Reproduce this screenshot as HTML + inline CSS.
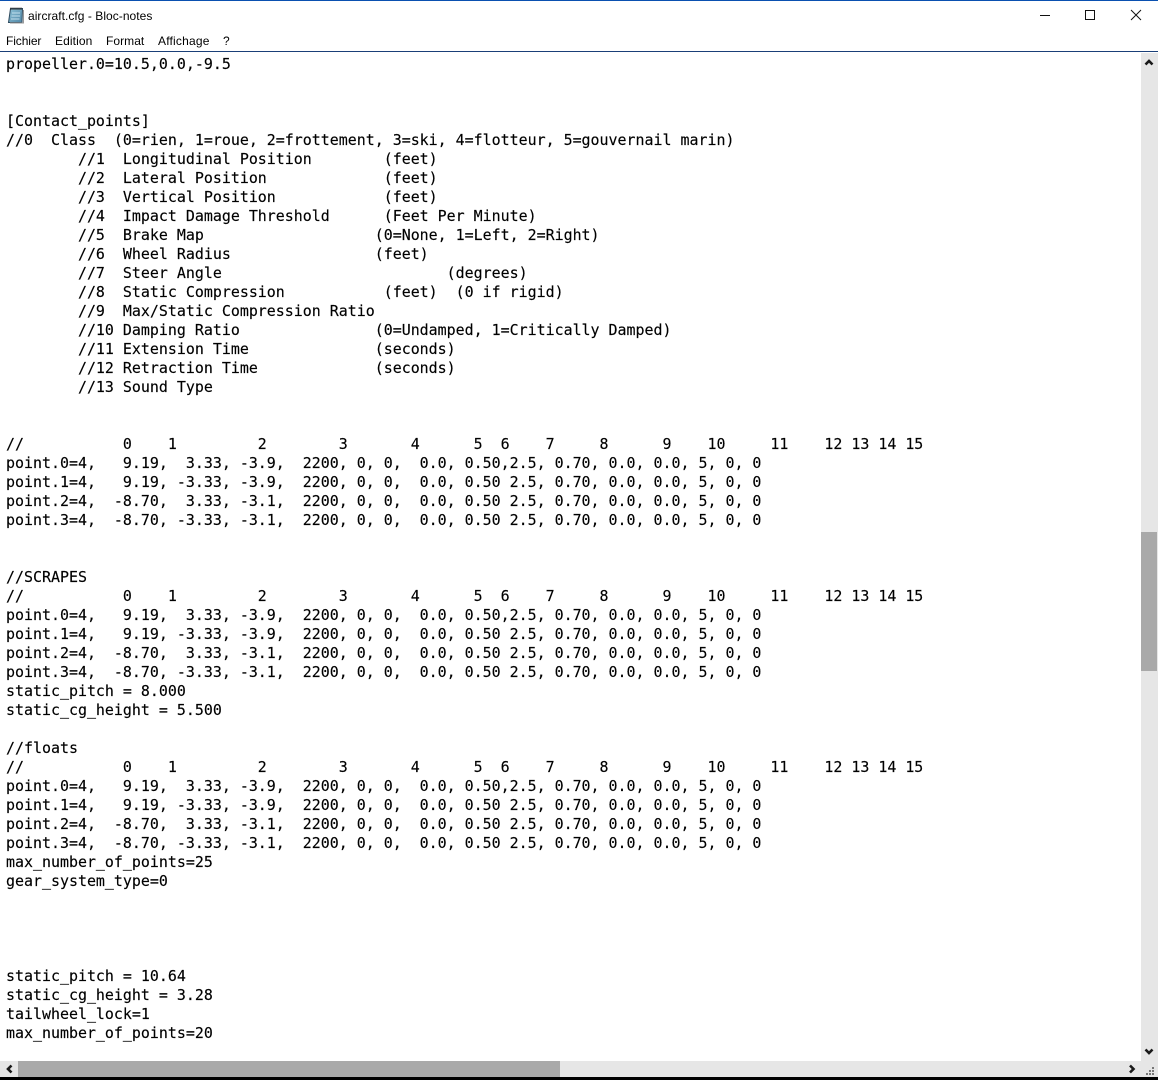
<!DOCTYPE html>
<html lang="fr">
<head>
<meta charset="utf-8">
<title>aircraft.cfg - Bloc-notes</title>
<style>
html,body{margin:0;padding:0;background:#fff;}
#w{position:relative;width:1158px;height:1080px;overflow:hidden;background:#fff;}
.a{position:absolute;}
.ui{font-family:"Liberation Sans",sans-serif;font-size:12px;line-height:14px;color:#000;white-space:pre;}
pre{position:absolute;left:6px;top:55px;margin:0;font-family:"DejaVu Sans Mono",monospace;font-size:14.958px;line-height:19px;color:#000;-webkit-text-stroke:0.15px #000;}
</style>
</head>
<body>
<div id="w">
<div class="a" style="left:0;top:0;width:1158px;height:1px;background:#0a50b0"></div>
<svg class="a" style="left:7px;top:7px" width="18" height="17" viewBox="0 0 18 17">
<defs><linearGradient id="g" x1="0" y1="0" x2="1" y2="1"><stop offset="0" stop-color="#8fc3d8"/><stop offset="1" stop-color="#4f86a6"/></linearGradient></defs>
<path d="M3.5 1.5H15.5L15 15.5H1.5Z" fill="url(#g)" stroke="#2f4a5e"/>
<path d="M16.5 3V16H3" stroke="#9a9a9a" fill="none"/>
<path d="M4 0.5V3M6 0.5V3M8 0.5V3M10 0.5V3M12 0.5V3M14 0.5V3" stroke="#333" stroke-width="1"/>
<path d="M5 6H13M4.5 9H13M4 12H12.500" stroke="#c2e0ee"/>
</svg>
<div class="a ui" style="left:28px;top:9px;letter-spacing:.04px">aircraft.cfg - Bloc-notes</div>
<svg class="a" style="left:1030px;top:4px" width="118" height="24" viewBox="0 0 118 24" fill="none" stroke="#111" stroke-width="1">
<path d="M10 11.5H20"/>
<path d="M55.5 6.5H64.5V15.5H55.5Z"/>
<path d="M101 6L111 16M111 6L101 16"/>
</svg>
<div class="a ui" style="left:6px;top:34px;letter-spacing:-.1px">Fichier</div>
<div class="a ui" style="left:55px;top:34px;letter-spacing:.1px">Edition</div>
<div class="a ui" style="left:106px;top:34px;letter-spacing:.05px">Format</div>
<div class="a ui" style="left:158px;top:34px;letter-spacing:.2px">Affichage</div>
<div class="a ui" style="left:223px;top:34px">?</div>
<div class="a" style="left:0;top:51px;width:1158px;height:1px;background:#1a3f78"></div>
<pre>propeller.0=10.5,0.0,-9.5


[Contact_points]
//0  Class  (0=rien, 1=roue, 2=frottement, 3=ski, 4=flotteur, 5=gouvernail marin)
        //1  Longitudinal Position        (feet)
        //2  Lateral Position             (feet)
        //3  Vertical Position            (feet)
        //4  Impact Damage Threshold      (Feet Per Minute)
        //5  Brake Map                   (0=None, 1=Left, 2=Right)
        //6  Wheel Radius                (feet)
        //7  Steer Angle                         (degrees)
        //8  Static Compression           (feet)  (0 if rigid)
        //9  Max/Static Compression Ratio
        //10 Damping Ratio               (0=Undamped, 1=Critically Damped)
        //11 Extension Time              (seconds)
        //12 Retraction Time             (seconds)
        //13 Sound Type


//           0    1         2        3       4      5  6    7     8      9    10     11    12 13 14 15
point.0=4,   9.19,  3.33, -3.9,  2200, 0, 0,  0.0, 0.50,2.5, 0.70, 0.0, 0.0, 5, 0, 0
point.1=4,   9.19, -3.33, -3.9,  2200, 0, 0,  0.0, 0.50 2.5, 0.70, 0.0, 0.0, 5, 0, 0
point.2=4,  -8.70,  3.33, -3.1,  2200, 0, 0,  0.0, 0.50 2.5, 0.70, 0.0, 0.0, 5, 0, 0
point.3=4,  -8.70, -3.33, -3.1,  2200, 0, 0,  0.0, 0.50 2.5, 0.70, 0.0, 0.0, 5, 0, 0


//SCRAPES
//           0    1         2        3       4      5  6    7     8      9    10     11    12 13 14 15
point.0=4,   9.19,  3.33, -3.9,  2200, 0, 0,  0.0, 0.50,2.5, 0.70, 0.0, 0.0, 5, 0, 0
point.1=4,   9.19, -3.33, -3.9,  2200, 0, 0,  0.0, 0.50 2.5, 0.70, 0.0, 0.0, 5, 0, 0
point.2=4,  -8.70,  3.33, -3.1,  2200, 0, 0,  0.0, 0.50 2.5, 0.70, 0.0, 0.0, 5, 0, 0
point.3=4,  -8.70, -3.33, -3.1,  2200, 0, 0,  0.0, 0.50 2.5, 0.70, 0.0, 0.0, 5, 0, 0
static_pitch = 8.000
static_cg_height = 5.500

//floats
//           0    1         2        3       4      5  6    7     8      9    10     11    12 13 14 15
point.0=4,   9.19,  3.33, -3.9,  2200, 0, 0,  0.0, 0.50,2.5, 0.70, 0.0, 0.0, 5, 0, 0
point.1=4,   9.19, -3.33, -3.9,  2200, 0, 0,  0.0, 0.50 2.5, 0.70, 0.0, 0.0, 5, 0, 0
point.2=4,  -8.70,  3.33, -3.1,  2200, 0, 0,  0.0, 0.50 2.5, 0.70, 0.0, 0.0, 5, 0, 0
point.3=4,  -8.70, -3.33, -3.1,  2200, 0, 0,  0.0, 0.50 2.5, 0.70, 0.0, 0.0, 5, 0, 0
max_number_of_points=25
gear_system_type=0




static_pitch = 10.64
static_cg_height = 3.28
tailwheel_lock=1
max_number_of_points=20</pre>
<div class="a" style="left:1141px;top:53px;width:17px;height:1008px;background:#e6e6e6"></div>
<div class="a" style="left:1141px;top:532px;width:16px;height:139px;background:#a9a9a9"></div>
<div class="a" style="left:0;top:1061px;width:1158px;height:16px;background:#e6e6e6"></div>
<div class="a" style="left:18px;top:1061px;width:542px;height:16px;background:#a9a9a9"></div>
<div class="a" style="left:0;top:1077px;width:1158px;height:3px;background:#000"></div>
<svg class="a" style="left:0;top:0" width="1158" height="1080" viewBox="0 0 1158 1080" fill="none" stroke="#1a1a1a" stroke-width="2.6">
<path d="M1145.500 64.500L1149 61L1152.500 64.500"/>
<path d="M1145.500 1049.500L1149 1053L1152.500 1049.500"/>
<path d="M11.500 1065.500L8 1069L11.500 1072.500"/>
<path d="M1130 1065.500L1133.500 1069L1130 1072.500"/>
</svg>
<svg class="a" style="left:1146px;top:1066px" width="9" height="10" viewBox="0 0 9 10" fill="#777">
<rect x="6" y="1" width="2" height="2"/>
<rect x="3" y="4" width="2" height="2"/><rect x="6" y="4" width="2" height="2"/>
<rect x="0" y="7" width="2" height="2"/><rect x="3" y="7" width="2" height="2"/><rect x="6" y="7" width="2" height="2"/>
</svg>
</div>
</body>
</html>
